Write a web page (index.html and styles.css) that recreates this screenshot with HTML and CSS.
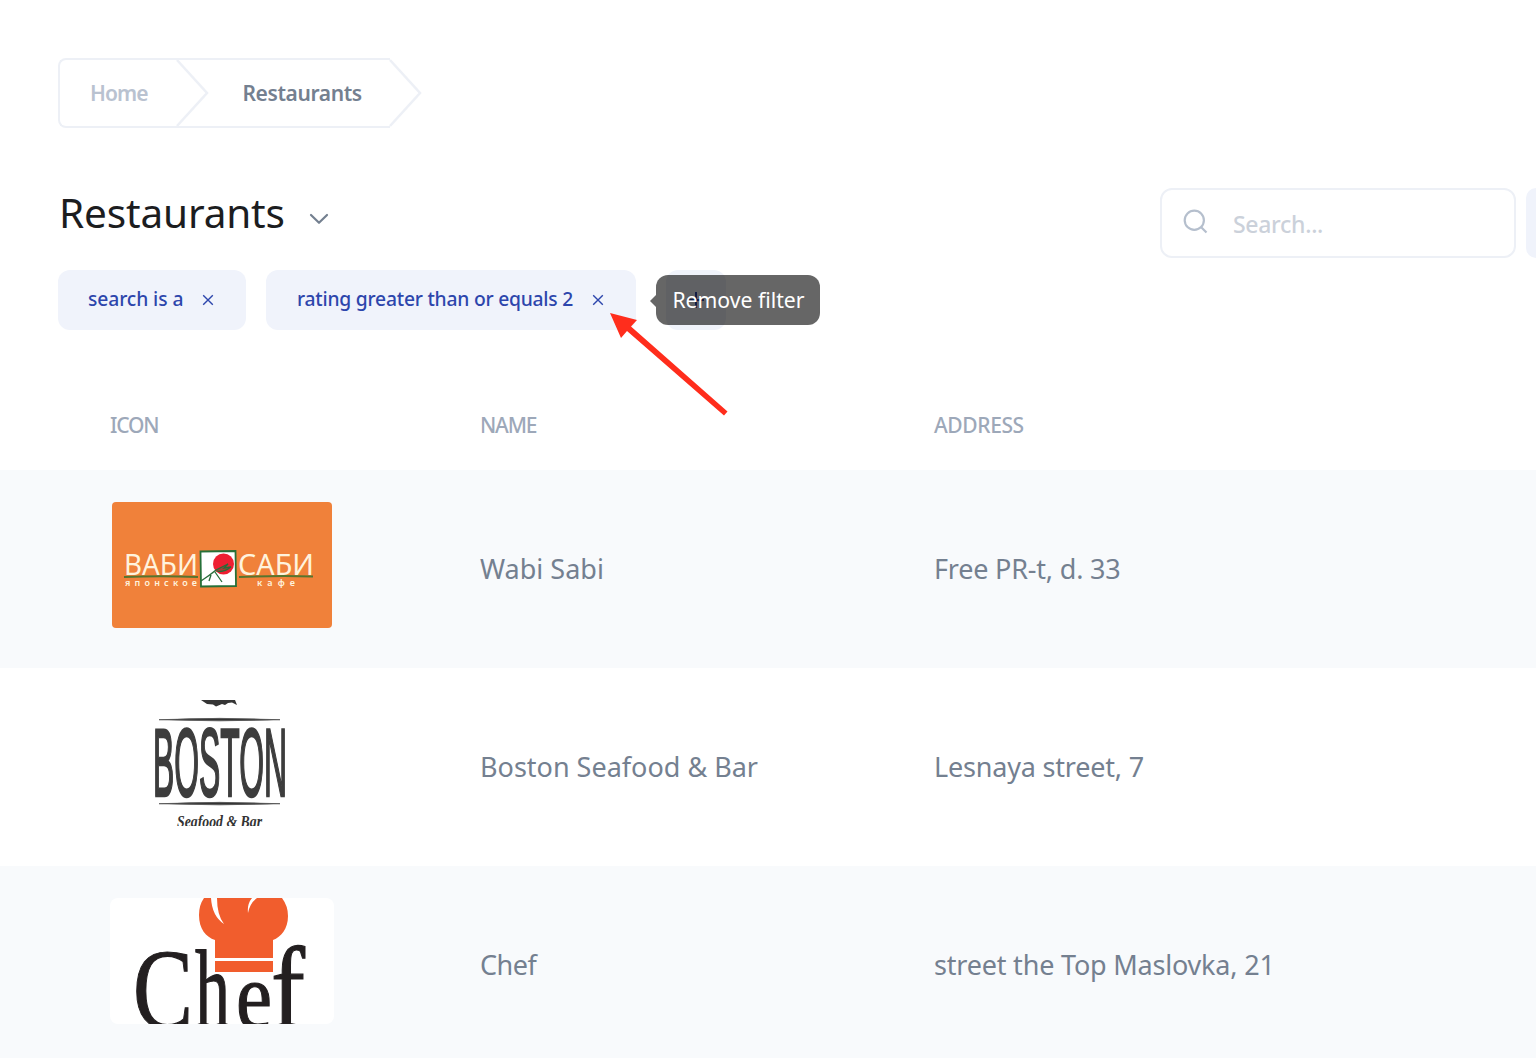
FILE: index.html
```html
<!DOCTYPE html>
<html lang="en">
<head>
<meta charset="utf-8">
<title>Restaurants</title>
<link rel="stylesheet" href="styles.css">
</head>
<body>
<main class="page">
  <nav class="breadcrumbs">
    <a class="crumb crumb-home"><span>Home</span></a>
    <svg class="crumb-arrow" width="34" height="70" viewBox="0 0 34 70"><path d="M2 2 32 35 2 68"/></svg>
    <a class="crumb crumb-current"><span>Restaurants</span></a>
    <svg class="crumb-arrow crumb-end" width="34" height="70" viewBox="0 0 34 70"><path d="M1 2 31 35 1 68"/></svg>
  </nav>

  <header class="toolbar">
    <h1 class="title"><span>Restaurants</span>
      <svg width="20" height="12" viewBox="0 0 20 12"><path d="M2 2l8 7.800L18 2"/></svg>
    </h1>
    <label class="search">
      <svg width="26" height="26" viewBox="0 0 26 26"><circle cx="11.300" cy="11.300" r="9.600"/><path d="M18 18l5.500 5.500"/></svg>
      <span>Search...</span>
    </label>
    <div class="action"></div>
  </header>

  <section class="filters">
    <div class="chip chip-search"><span>search is a</span>
      <svg width="12" height="12" viewBox="0 0 12 12"><path d="M1.200 1.200l9.600 9.600M10.800 1.200l-9.600 9.600"/></svg>
    </div>
    <div class="chip chip-rating"><span>rating greater than or equals 2</span>
      <svg width="12" height="12" viewBox="0 0 12 12"><path d="M1.200 1.200l9.600 9.600M10.800 1.200l-9.600 9.600"/></svg>
      <div class="tooltip"><span>Remove filter</span></div>
      <svg class="pointer" width="120" height="104" viewBox="0 0 120 104"><path d="M1 1 28 8 22 14.500 118.500 99.500 115 103.500 18 19 12 26z"/></svg>
    </div>
    <div class="chip chip-add">
      <svg width="16" height="16" viewBox="0 0 16 16"><path d="M8 0v16M0 8h16"/></svg>
    </div>
  </section>

  <section class="table">
    <div class="row head"><span>ICON</span><span>NAME</span><span>ADDRESS</span></div>
    <div class="row shaded">
      <svg class="logo" width="224" height="126" viewBox="0 0 224 126">
        <rect x="2" width="220" height="126" rx="4" fill="#f0813a"/>
        <g fill="#fff3dd" font-family="Noto Sans, sans-serif">
          <text x="14" y="73" font-size="29" font-weight="400" textLength="74" lengthAdjust="spacingAndGlyphs">ВАБИ</text>
          <text x="128" y="73" font-size="29" font-weight="400" textLength="76" lengthAdjust="spacingAndGlyphs">САБИ</text>
          <text x="15" y="84" font-size="9" font-weight="600" textLength="72">японское</text>
          <text x="147" y="84" font-size="9" font-weight="600" textLength="38">кафе</text>
        </g>
        <path d="M14 75Q50 73.500 88 75M129 75Q168 73.500 203 74.500" fill="none" stroke="#55752f" stroke-width="2"/>
        <path d="M90.500 49.500 125.500 49 126 84 91 84.500z" fill="#fff" stroke="#267038" stroke-width="1.800"/>
        <circle cx="113.500" cy="62" r="10.500" fill="#ee1f32"/>
        <path d="M91 79Q100 73 106 68L118 62 114 66 121 65Q113 71 107 69M105 70 112 80M101 73 99 79" fill="#286c39" fill-opacity=".35" stroke="#286c39" stroke-width="1.300"/>
      </svg>
      <span>Wabi Sabi</span><span class="tight">Free PR-t, d. 33</span>
    </div>
    <div class="row">
      <svg class="logo" width="224" height="126" viewBox="0 0 224 126">
        <path d="M91 0H125L127 5 122 2.500 118 3 115 5 112 4 106 6.500 103 4.500 97 4z" fill="#353535"/>
        <path d="M49 19.700Q110 17 170 19.700 110 22 49 19.700M49 103.700Q110 101 170 103.700 110 106 49 103.700" fill="#333" stroke="#555" stroke-width=".8"/>
        <g class="boston-word"><text x="43" y="96" font-family="Liberation Sans Narrow, Liberation Sans, sans-serif" font-size="96" font-weight="400" textLength="134" lengthAdjust="spacingAndGlyphs" fill="#3d3d3d">BOSTON</text></g>
        <text x="67" y="127" font-family="Liberation Serif, serif" font-size="17" font-style="italic" font-weight="700" textLength="85" lengthAdjust="spacingAndGlyphs" fill="#333">Seafood &amp; Bar</text>
      </svg>
      <span>Boston Seafood &amp; Bar</span><span class="tight">Lesnaya street, 7</span>
    </div>
    <div class="row shaded">
      <svg class="logo" width="224" height="126" viewBox="0 0 224 126">
        <rect width="224" height="126" rx="8" fill="#fff"/>
        <g class="chef-word" font-family="Liberation Serif, serif" fill="#231f20">
          <text x="23" y="130" font-size="114" textLength="60" lengthAdjust="spacingAndGlyphs">C</text>
          <text x="85" y="130" font-size="112" textLength="35" lengthAdjust="spacingAndGlyphs">h</text>
          <text x="126" y="130" font-size="95" textLength="36" lengthAdjust="spacingAndGlyphs">e</text>
          <text x="161" y="130" font-size="116" textLength="34" lengthAdjust="spacingAndGlyphs">f</text>
        </g>
        <path d="M105 60h58v3h-58z" fill="#fff"/>
        <path d="M94 0H172Q178 8 178 18C178 31 171 39 163 42V60H105V42C96 39 89 31 89 17Q89 7 94 0zM105 63h58v11h-58z" fill="#f15d2d"/>
        <path d="M101 0Q102 18 114 26 107 17 107 0zM142 0Q137 6 138 15 140 5 147 0z" fill="#fff"/>
      </svg>
      <span class="narrow">Chef</span><span class="tight">street the Top Maslovka, 21</span>
    </div>
  </section>
</main>
</body>
</html>
```
FILE: styles.css
```css
* { box-sizing: border-box; }
body { margin: 0; background: #fff; font-family: "Noto Sans", "Open Sans", sans-serif; color: #748090; }
.page { height: 1058px; overflow: hidden; padding-top: 58px; }
svg { display: block; flex: none; }

.breadcrumbs { display: flex; height: 70px; margin-left: 58px; font-size: 21px; font-weight: 500; }
.crumb { display: flex; align-items: center; border: solid #edf0f6; border-width: 2px 0; padding-bottom: 1px; white-space: nowrap; }
.crumb-home { width: 117px; padding-left: 30px; border-left-width: 2px; border-radius: 8px 0 0 8px; color: #b9c2d0; font-weight: 600; letter-spacing: -.9px; }
.crumb-current { width: 216px; padding-left: 68.5px; margin-left: -35px; color: #748090; font-weight: 600; letter-spacing: -.4px; }
.crumb-arrow { fill: none; stroke: #edf0f6; stroke-width: 2.5; }
.crumb-end { margin-left: -1px; }

.toolbar { display: flex; margin-top: 60px; padding-left: 58px; height: 70px; }
.title { flex: 1; display: flex; gap: 24px; margin: 0; padding: 0 0 2px 1px; height: 50px; align-items: center; font-size: 40.5px; font-weight: 400; letter-spacing: -.15px; color: #1c1d1f; }
.title svg { margin-top: 13px; fill: none; stroke: #748090; stroke-width: 2.2; stroke-linecap: round; stroke-linejoin: round; }
.search { display: flex; gap: 24px; width: 356px; padding: 0 0 2px 21px; align-items: center; border: 2px solid #edf0f6; border-radius: 12px; font-size: 23px; font-weight: 500; letter-spacing: -.3px; color: #cbd1da; }
.search span { padding-top: 3px; }
.search svg { fill: none; stroke: #b5bfcd; stroke-width: 2.2; }
.action { width: 10px; margin-left: 10px; background: #f0f3fb; border-radius: 12px 0 0 12px; }

.filters { display: flex; margin: 12px 0 0 58px; gap: 20px; }
.chip { position: relative; display: flex; align-items: center; height: 60px; padding: 0 0 0 30px; border-radius: 12px; background: #f0f3fb; color: #2d46ac; font-size: 19.3px; font-weight: 500; white-space: nowrap; }
.chip > span { padding-bottom: 3px; }
.chip svg { fill: none; stroke: #2d46ac; stroke-width: 1.4; }
.chip-search { width: 188px; gap: 19px; letter-spacing: -.1px; }
.chip-rating { width: 370px; padding-left: 31px; gap: 19px; z-index: 1; letter-spacing: -.23px; }
.chip-add { width: 60px; margin-left: 10px; padding: 0; justify-content: center; }
.chip-add svg { stroke-width: 2; }
.tooltip { position: absolute; left: 390px; top: 5px; width: 164px; height: 50px; display: flex; align-items: center; justify-content: center; padding: 0 0 2px 1px; border-radius: 12px; background: rgba(0, 0, 0, .6); color: #fff; font-size: 21.2px; font-weight: 400; letter-spacing: 0; }
.tooltip::before { content: ""; position: absolute; left: -6px; top: 20px; border: solid transparent; border-width: 6px 6px 6px 0; border-right-color: rgba(0, 0, 0, .6); }
.chip .pointer { position: absolute; left: 343px; top: 42px; fill: #ff2d1c; stroke: none; }

.table { margin-top: 50px; }
.row { display: grid; grid-template-columns: 370px 454px 1fr; height: 198px; padding: 0 0 2px 110px; align-items: center; font-size: 27px; white-space: nowrap; }
.row .logo { align-self: start; margin-top: 32px; overflow: hidden; }
.row .tight { letter-spacing: -.2px; }
.row .narrow { letter-spacing: -.5px; }
.row.head { height: 90px; padding-bottom: 1px; font-size: 21px; font-weight: 500; letter-spacing: -.4px; color: #9da8b9; }
.head span:first-child, .head span:nth-child(2) { letter-spacing: -1.2px; }
.shaded { background: #f8fafc; }
.boston-word { stroke: #3d3d3d; stroke-width: 2.6; }
.chef-word { stroke: #231f20; stroke-width: 1.2; }
```
